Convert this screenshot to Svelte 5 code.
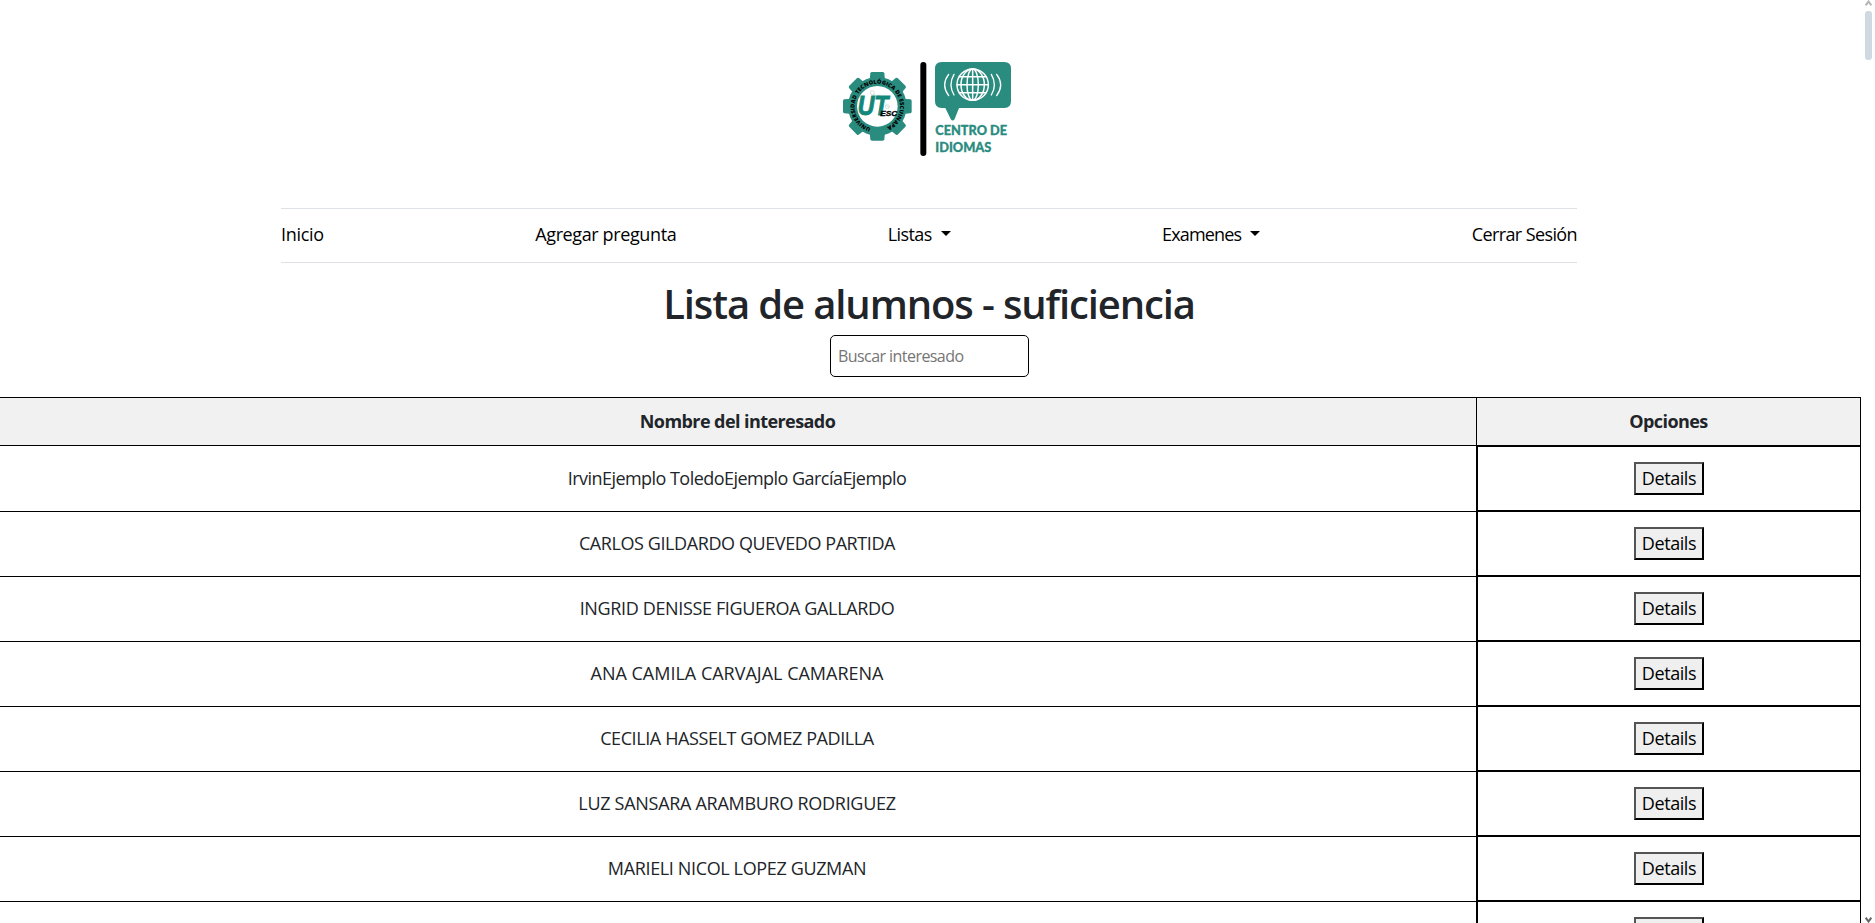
<script>
  const nav = [
    { label: 'Inicio', track: -0.3 },
    { label: 'Agregar pregunta', track: -0.38 },
    { label: 'Listas', track: -0.6, menu: true },
    { label: 'Examenes', track: -0.85, menu: true },
    { label: 'Cerrar Sesión', track: -0.6 }
  ];
  const rows = [
    { name: 'IrvinEjemplo ToledoEjemplo GarcíaEjemplo', track: -0.54 },
    { name: 'CARLOS GILDARDO QUEVEDO PARTIDA', track: -0.41 },
    { name: 'INGRID DENISSE FIGUEROA GALLARDO', track: -0.36 },
    { name: 'ANA CAMILA CARVAJAL CAMARENA', track: 0 },
    { name: 'CECILIA HASSELT GOMEZ PADILLA', track: -0.4 },
    { name: 'LUZ SANSARA ARAMBURO RODRIGUEZ', track: -0.29 },
    { name: 'MARIELI NICOL LOPEZ GUZMAN', track: -0.36 },
    { name: '', track: 0 }
  ];
  const teeth = [0, 45, 90, 135, 180, 225, 270, 315];
</script>

<div class="page">
  <main>
    <header>
      <svg class="logo" viewBox="0 0 600 360" width="200" height="120" aria-label="Centro de Idiomas">
        <g fill="#2a8b7f">
          {#each teeth as angle}
            <path d="M119 92 L121 70 Q122 66 126 66 H158 Q162 66 163 70 L165 92 Z" transform="rotate({angle} 142 169)" />
          {/each}
          <circle cx="142" cy="169" r="88" />
        </g>
        <circle cx="142" cy="169" r="61" fill="#fff" />
        <path id="ring" d="M122 234 A68 68 0 1 1 164 233.3" fill="none" />
        <text class="seal" font-size="17"><textPath href="#ring" textLength="377">UNIVERSIDAD TECNOLÓGICA DE ESCUINAPA</textPath></text>
        <g fill="none" stroke="#c3d2d0" stroke-width="2">
          <circle cx="127" cy="128" r="6" />
          <path d="M132 133 L145 142 M165 165 L177 172" />
          <circle cx="146" cy="140" r="5" />
          <circle cx="172" cy="170" r="6" />
        </g>
        <text class="ut" x="83" y="194" font-size="84" textLength="92" lengthAdjust="spacingAndGlyphs">UT</text>
        <text class="esc" x="151" y="197" font-size="23" textLength="51" lengthAdjust="spacingAndGlyphs">ESC</text>
        <rect x="271" y="36" width="18" height="282" rx="9" fill="#000" />
        <path d="M335 36 H523 Q543 36 543 56 V154 Q543 174 523 174 H387 L374 207 Q368 216 362 207 L346 174 H335 Q315 174 315 154 V56 Q315 36 335 36 Z" fill="#2a8b7f" />
        <g fill="none" stroke="#fff" stroke-width="4.5" stroke-linecap="round" transform="translate(-2 0)">
          <circle cx="430" cy="104" r="47" />
          <ellipse cx="430" cy="104" rx="17" ry="47" />
          <ellipse cx="430" cy="104" rx="35" ry="47" />
          <path d="M383 104 H477 M390 80 H470 M390 128 H470 M430 57 V151" />
          <path d="M374 73 Q356 104 374 135 M486 73 Q504 104 486 135" stroke-width="4" />
          <path d="M358 73 Q334 104 358 137 M502 73 Q526 104 502 137" stroke-width="4" />
        </g>
        <text class="brand" x="316" y="256" textLength="215" lengthAdjust="spacingAndGlyphs">CENTRO DE</text>
        <text class="brand" x="316" y="306" textLength="168" lengthAdjust="spacingAndGlyphs">IDIOMAS</text>
      </svg>
      <nav>
        {#each nav as item}
          <a href="#top"><span style:letter-spacing="{item.track}px">{item.label}</span>{#if item.menu}<i class="caret"></i>{/if}</a>
        {/each}
      </nav>
      <h1>Lista de alumnos - suficiencia</h1>
      <input type="text" placeholder="Buscar interesado" />
    </header>
    <div class="table">
      <div class="row head">
        <div class="cell name">Nombre del interesado</div>
        <div class="cell">Opciones</div>
      </div>
      {#each rows as row}
        <div class="row">
          <div class="cell name" style:letter-spacing="{row.track}px">{row.name}</div>
          <div class="cell options"><button>Details</button></div>
        </div>
      {/each}
    </div>
  </main>
  <aside class="scrollbar">
    <svg class="up" width="7" height="6" viewBox="0 0 7 6"><path d="M.7 5.3 3.5 1.5 6.3 5.3" /></svg>
    <div class="thumb"></div>
    <svg class="down" width="7" height="6" viewBox="0 0 7 6"><path d="M.7 .7 3.5 4.5 6.3 .7" /></svg>
  </aside>
</div>

<style>
  :global(body) { margin: 0; background: #fff; overflow: hidden; }
  .page {
    display: flex;
    height: 923px;
    overflow: hidden;
    color: #212529;
    font: 400 18px/27px "Open Sans", sans-serif;
  }
  main { width: 1861px; flex: none; overflow: hidden; }
  header {
    display: flex;
    flex-direction: column;
    align-items: center;
    width: 1858px;
    padding-top: 50px;
  }
  .logo { display: block; margin: 0 0 38px 2px; }
  nav {
    display: flex;
    justify-content: space-between;
    align-items: center;
    box-sizing: border-box;
    width: 1296px;
    height: 55px;
    padding-bottom: 2px;
    border-top: 1px solid #dee2e6;
    border-bottom: 1px solid #dee2e6;
  }
  nav a { display: flex; align-items: center; color: #000; text-decoration: none; white-space: nowrap; }
  .caret {
    margin: -3px 0 0 9px;
    border-top: 5px solid #000;
    border-left: 5px solid transparent;
    border-right: 5px solid transparent;
  }
  h1 { margin: 17px 0 7px; font-size: 40px; font-weight: 600; line-height: 48px; letter-spacing: -1.12px; }
  input {
    box-sizing: border-box;
    width: 199px;
    height: 42px;
    margin: 0 0 20px 1px;
    padding: 0 7px;
    border: 1px solid #000;
    border-radius: 5px;
    background: #fff;
    font: 16px "Open Sans", sans-serif;
    letter-spacing: -0.56px;
  }
  input::placeholder { color: #757575; opacity: 1; }
  .row { display: grid; grid-template-columns: 1476px 385px; height: 65px; }
  .row.head { height: 48px; background: #f1f1f1; font-weight: 700; letter-spacing: -0.57px; }
  .head + .row { height: 66px; }
  .cell {
    display: flex;
    align-items: center;
    justify-content: center;
    box-sizing: border-box;
    border-top: 1px solid #000;
    border-left: 1px solid #000;
    border-right: 1px solid #000;
  }
  .name { border-left: 0; border-right: 0; padding: 0 2px 1px 0; white-space: nowrap; }
  .head .name { padding: 0 1px 0 0; }
  .options { border-left-width: 2px; border-bottom: 1px solid #000; }
  .head + .row .options { border-top-width: 2px; }
  button {
    box-sizing: border-box;
    width: 70px;
    height: 33px;
    padding: 0;
    border: 2px outset #000;
    border-radius: 0;
    background: #efefef;
    color: #000;
    font: inherit;
    letter-spacing: -0.42px;
  }
  .scrollbar { display: flex; flex-direction: column; align-items: center; width: 14px; }
  .scrollbar svg { fill: none; stroke-width: 2; }
  .up { stroke: #b5b5b5; }
  .down { margin-top: auto; stroke: #666; }
  .thumb { width: 7px; height: 49px; margin-top: 5px; border-radius: 3px; background: #d0d9e2; }
  .seal { font-family: "Open Sans", sans-serif; font-weight: 800; fill: #000; }
  .ut { font-family: "Liberation Sans", sans-serif; font-weight: 700; font-style: italic; fill: #12877a; stroke: #12877a; stroke-width: 3; }
  .esc { font-family: "Liberation Sans", sans-serif; font-weight: 700; font-style: italic; fill: #000; stroke: #000; stroke-width: 1; }
  .brand { font-family: Lato, sans-serif; font-size: 42px; font-weight: 900; fill: #2a8b7f; stroke: #2a8b7f; stroke-width: 1; }
</style>
